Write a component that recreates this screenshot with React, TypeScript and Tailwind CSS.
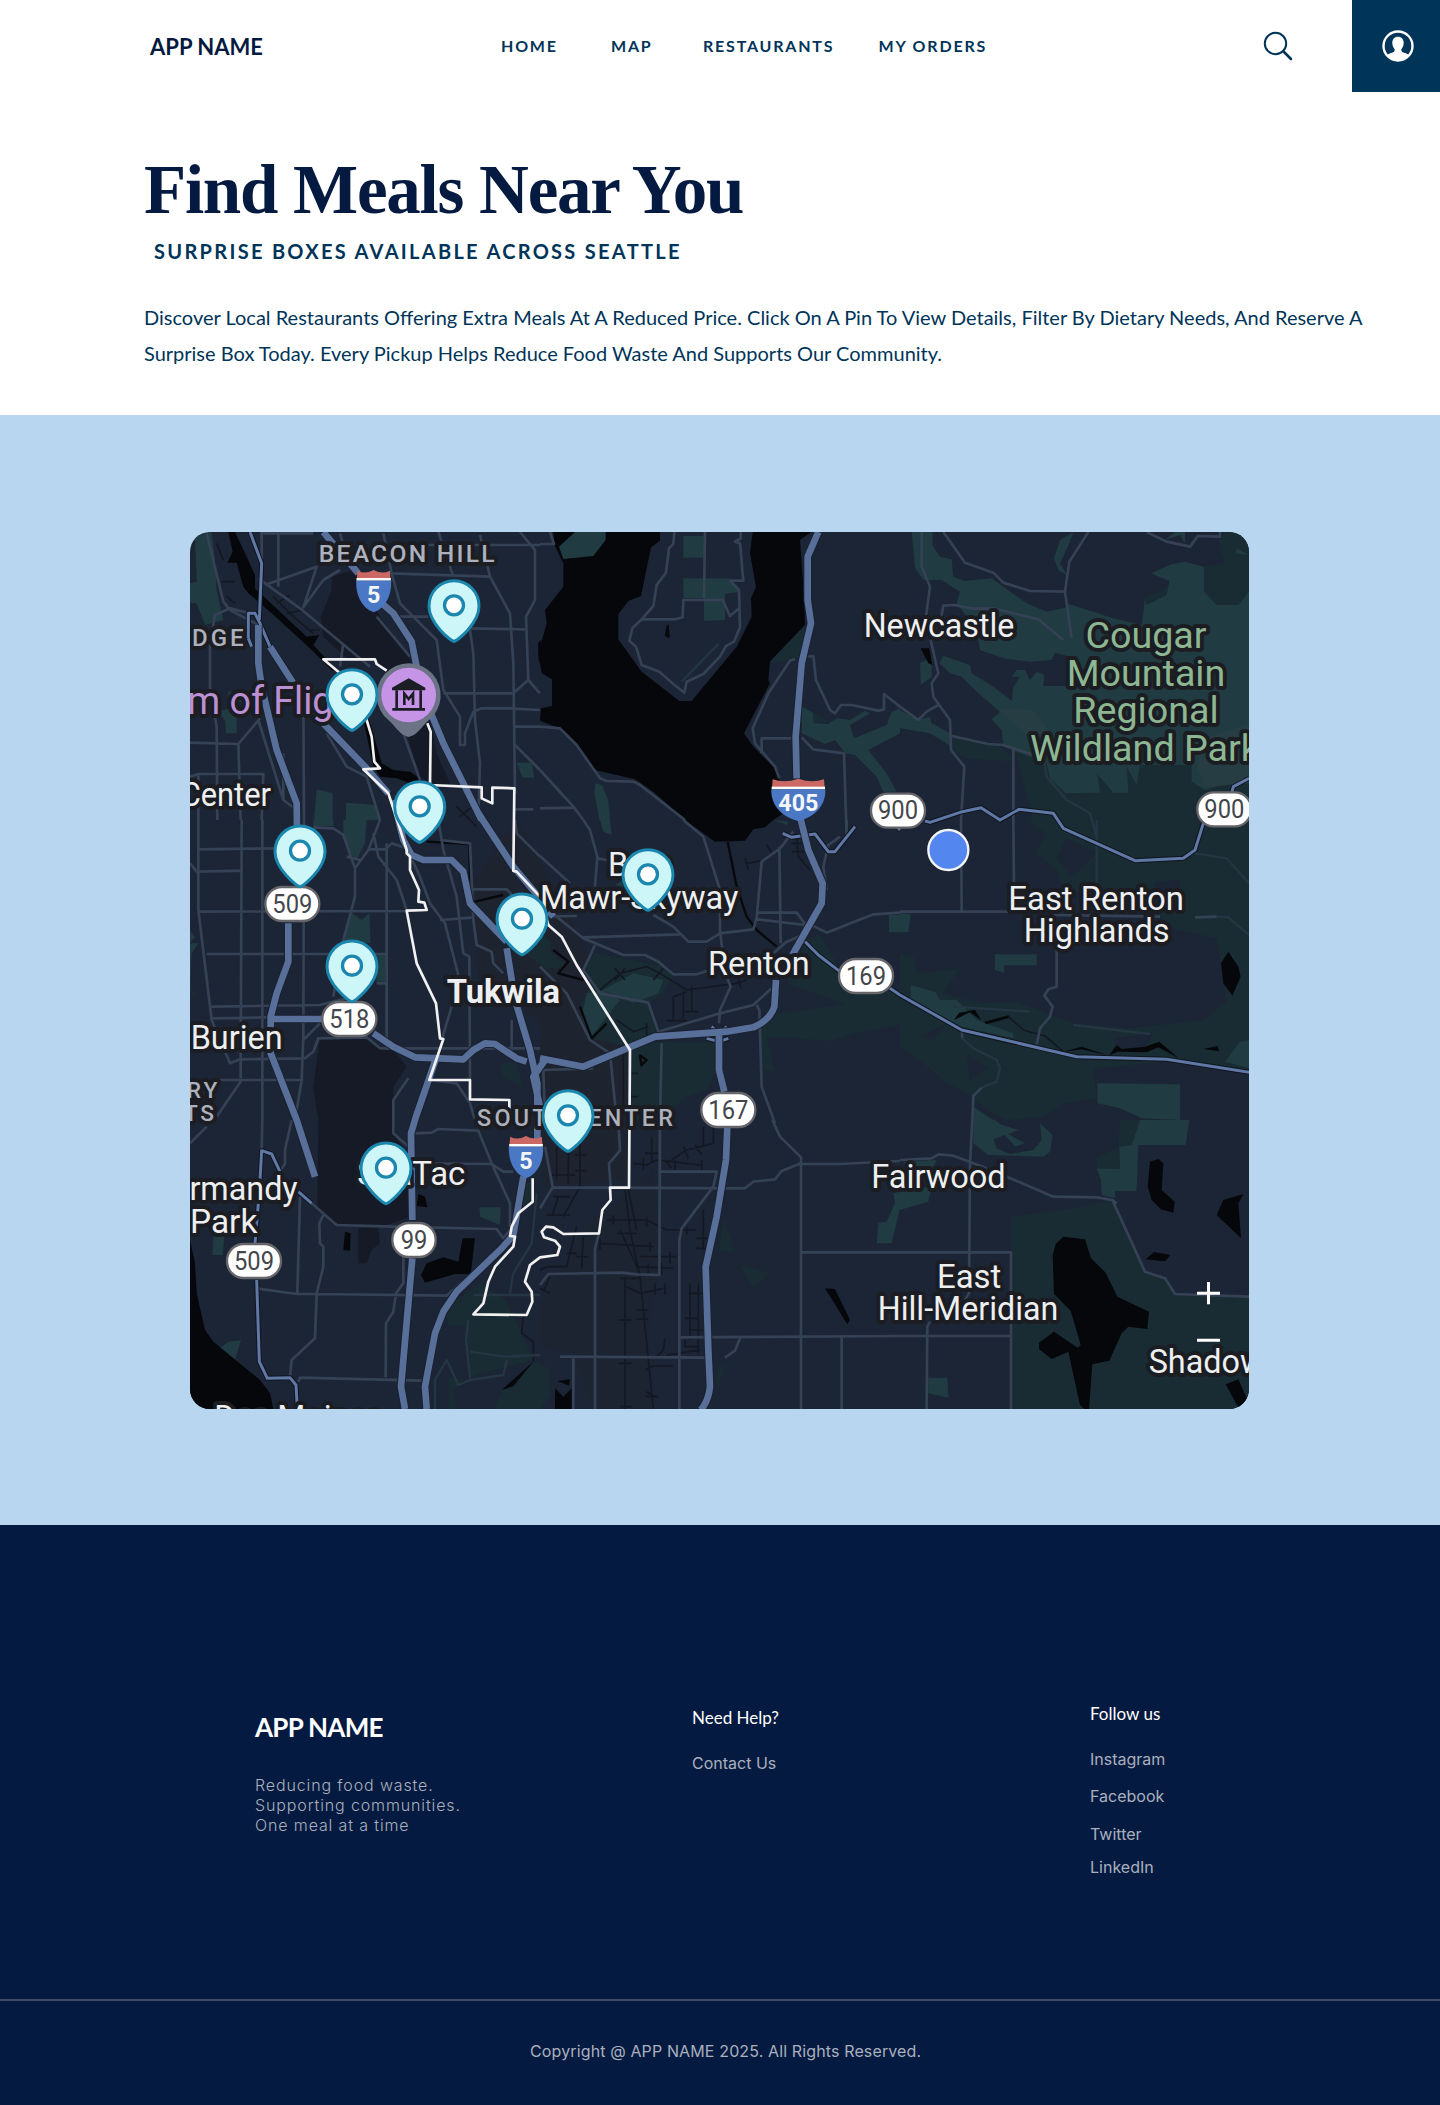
import React from "react";

type Tile = {
  x: number;
  y: number;
  shade?: string;
  parkDark?: string;
  park?: string;
  land?: string;
  water?: string;
  creek?: string;
  minor?: string;
  faint?: string;
  rail?: string;
  thin?: string;
  main?: string;
};

// The map is split in nine 1080x900 sheets, each with its own local origin.
const tiles: Tile[] = [
  {
    x: 0,
    y: 0,
    shade:
      "M455,170 L520,150 L560,200 L600,290 L680,400 L700,440 L620,455 L590,420 L500,415 L430,350 L422,290 L455,210Z M680,640 L750,600 L770,700 L810,790 L760,800 L720,770Z",
    park: "M45,50 L95,36 L105,120 L110,210 L130,300 L75,315 L50,250 L30,250 L30,190 L50,185Z M110,575 L170,560 L170,640 L138,640 L135,600Z M145,515 h45 v30 h-45z M410,808 L458,820 L458,900 L402,900Z M498,848 L590,855 L600,900 L498,900Z M1010,728 L1055,728 L1063,773 L1028,773Z",
    water:
      "M145,36 L165,36 L200,110 L225,165 L225,205 L300,275 L380,350 L418,345 L400,375 L475,455 L455,450 L385,380 L270,275 L205,220 L190,200 L170,128 L142,128 L158,95Z M548,590 L568,600 L605,730 L640,750 L690,755 L740,790 L690,790 L650,775 L600,770 L580,740Z M1074,370 l10,-10 v80 l-8,-20z",
    minor:
      "M245,36 L245,180 M295,36 L295,200 M240,40 L400,40 M80,40 L130,245 L150,270 L235,315 M235,175 L360,265 L570,440 M255,195 L410,140 L370,262 L430,180 L480,150 M30,668 L110,670 L175,672 L240,595 M210,280 L150,265 L105,285 L90,370 L90,500 L110,620 L112,900 M370,500 L372,900 M30,770 L55,762 L250,762 L245,900 M55,762 V900 M235,600 L310,840 L350,870 M175,670 L182,900 M310,700 L310,840 M610,40 L635,160 L660,250 L770,360 L790,510 L840,590 L840,675 L855,675 L855,640 L880,575 L905,565 L985,565 L1080,570 M630,160 L930,170 M775,36 L820,170 M900,45 L930,170 L990,280 L1000,430 L1005,820 M660,290 L745,290 M870,325 L1035,328 M870,330 L880,400 L885,600 L900,730 L895,900 M1020,36 L1065,90 L1065,240 L1038,290 L1045,480 L1080,520 M740,75 L1080,75 M480,40 L490,75 M790,520 L1000,520 L1045,480 M1005,620 L1080,620 M1000,670 L1080,750 M670,640 L720,780 M590,290 L690,410 M490,370 L480,440 M1060,868 L1005,868 M440,640 L500,740 L560,770 L600,900",
    rail: "M110,70 l20,50 M125,185 h40 M140,230 l25,20 M280,230 L340,290 L400,340 M290,250 l40,-25 M320,280 l50,-10 M390,330 h30 M830,860 l60,60 M840,890 l50,-40",
    thin: "M210,36 L245,130 L238,300 M205,355 L205,280 L225,280 L240,310 L270,380 M205,355 L215,380",
    main: "M430,36 L535,160 M600,245 L640,280 L695,365 L710,440 L745,560 L790,670 L905,900 M235,315 L235,430 L245,500 L290,690 L350,850 L352,1000 M270,380 L340,490 L430,610 L560,745 L625,820",
  },
  {
    x: 1080,
    y: 0,
    water:
      "M40,36 L815,36 L780,60 L793,240 L795,315 L690,425 L685,480 L690,490 L612,640 L640,680 L680,720 L715,755 L730,880 L700,900 L675,922 L640,928 L615,962 L525,965 L490,940 L435,900 L340,815 L285,778 L165,750 L100,665 L60,625 L0,602 L3,565 L36,558 L36,478 L5,460 L-5,400 L20,310 L15,270 L70,200 L70,130 L43,75Z",
    land: "M360,36 L360,62 L333,82 L303,228 L265,243 L235,283 L235,358 L305,455 L418,543 L455,543 L590,380 L635,290 L633,235 L648,200 L630,100 L638,36Z",
    parkDark: "M795,315 L785,410 L700,430 L690,425Z M785,555 L865,605 L820,612Z",
    park: "M105,36 L197,36 L197,60 L160,108 L70,117 L57,80Z M430,48 h62 v65 h-62z M430,175 L565,175 L598,215 L555,222 L555,300 L492,303 L492,235 L430,235Z M785,560 L820,580 L820,610 L865,612 L890,595 L930,600 L975,572 L990,580 L930,615 L942,655 L1040,615 L1055,575 L1080,565 L1080,640 L985,690 L1040,760 L1070,815 L1030,815 L1010,770 L945,705 L915,700 L885,660 L855,672 L785,640Z M165,790 L185,795 L205,840 L210,900 L178,900 L163,820Z",
    creek: "M383,318 L386,350 L378,345Z",
    minor:
      "M403,36 L400,72 L387,85 L378,158 L350,195 L340,258 L305,298 L277,325 L268,362 L288,380 L305,435 L358,455 L400,492 L433,518 L440,485 L490,462 L540,410 L558,378 L582,365 L600,322 L597,210 L570,182 L610,182 L600,70 L585,65 L602,55 L602,36 M495,36 L492,235 M305,298 L405,298 L428,292 L430,240 L548,240 L570,288 L597,265 M0,620 L60,625 L110,675 L180,775 L200,783 L280,785 L300,795 L435,900 M0,750 L100,860 L130,900 M0,865 L100,863 M30,36 L42,72 L0,72 M765,417 L750,422 L685,520 L638,625 L645,670 L705,740 L718,775 M755,655 L665,655 L665,700 M805,410 L820,408 L828,480 L870,570 L885,580 L903,555 L935,555 L1015,572 L1032,568 L1032,522 L1080,560 M785,652 L820,688 L912,700 L920,950",
    faint: "M425,485 L535,372",
    main: "M835,36 L803,110 L803,240 L813,310 L785,430 L767,650 L770,775",
  },
  {
    x: 2160,
    y: 0,
    parkDark:
      "M345,690 L430,720 L450,700 L1047,700 L1047,905 L400,905 L370,790Z M975,36 L1047,36 L1047,215 L1015,255 L740,255 L735,235 L912,140 L975,130 L955,70Z M155,640 L300,680 L350,725 L195,715 L155,690Z",
    park: "M35,36 L98,36 L97,75 L120,110 L155,118 L160,170 L195,183 L275,175 L380,250 L440,275 L500,262 L500,250 L640,295 L725,315 L735,235 L740,255 L800,225 L808,183 L752,160 L815,133 L855,125 L912,140 L912,215 L950,255 L1015,255 L1047,215 L1047,770 L915,810 L875,785 L875,735 L720,735 L710,795 L680,740 L685,818 L640,818 L592,762 L600,818 L498,820 L450,775 L440,730 L310,680 L305,630 L275,598 L335,545 L340,500 L360,470 L335,470 L350,450 L375,450 L390,480 L410,455 L433,465 L430,498 L510,498 L510,410 L465,398 L455,420 L390,425 L310,415 L240,390 L230,330 L170,250 L180,215 L125,180 L70,180 L45,145Z M0,570 L55,600 L90,590 L95,610 L150,640 L155,680 L90,640 L0,625Z M118,430 L130,407 L210,435 L215,460 L280,500 L345,550 L300,575 L235,520 L185,470 L150,460Z M60,430 L95,410 L95,470 L62,495Z M480,60 L520,36 L510,65 L480,130 L500,165 L475,150 L462,115Z M795,60 L825,36 L855,36 L855,70 L840,45Z M1010,85 L1047,105 L1008,100Z",
    water: "M62,385 L88,385 L97,435 L85,430Z",
    minor:
      "M65,36 L65,140 L90,200 L78,290 M130,36 L195,128 L280,158 L310,188 L390,213 L495,215 M565,36 L508,125 L495,215 L515,355 M122,300 L130,257 L165,255 L215,266 L280,265 L415,298 L490,360 M92,360 L115,460 L95,490 L100,530 L150,600 L153,690 L193,740 L183,900 M0,560 L55,600 L80,575 L115,555 M155,648 L265,672 L310,675 L420,710 M340,685 L340,900 M740,36 L800,65 L870,80 L893,48 L960,50 L960,36",
    faint: "M430,710 L440,770 L500,840 L570,880 L590,950",
    thin: "M-30,897 L0,930 M75,903 L90,907 L180,877 L243,863 L300,900 L357,868 L460,880 L490,925 L705,1022 L850,1015 L885,990 L910,910 M1047,775 L1000,800 L992,830",
  },
  {
    x: 0,
    y: 900,
    shade:
      "M420,655 L560,655 L600,685 L640,690 L680,740 L640,800 L640,900 L645,950 L685,1000 L690,1190 L620,1215 L470,1212 L412,1165 L415,900 L400,800Z",
    park: "M400,0 L460,0 L460,18 L400,18Z M490,0 L560,0 L555,70 L530,120 L510,100 L490,50Z M510,275 L545,300 L568,280 L572,370 L490,365Z M590,400 L620,402 L615,485 L590,485Z M30,330 L45,350 L30,370 L55,370 L35,400 L30,520Z",
    parkDark: "M965,730 L1010,730 L1030,800 L965,770Z M1035,400 L1080,370 L1115,400 L1150,430 L1100,450Z M30,490 L48,530 L30,520Z",
    creek: "M740,65 L868,72 L870,190 M885,245 L970,225",
    minor:
      "M55,0 L55,270 L95,600 L150,730 L180,718 L375,715 L400,695 L415,655 L560,652 L600,685 L1080,685 M185,0 L182,775 M247,0 L247,900 M372,0 L370,650 L365,780 L345,900 M55,88 L300,85 M55,155 L185,152 M55,275 L680,273 M80,402 L620,402 M95,560 L420,555 L520,530 M95,595 L270,592 M95,780 L370,780 M30,130 L55,160 M600,0 L565,90 L525,145 L490,45 L460,25 L400,22 M525,145 L525,230 L490,360 L460,530 M565,88 L620,88 M620,70 L620,690 M580,40 L595,110 L650,180 L680,270 M620,85 L635,70 L680,85 L720,170 L750,250 L795,310 L835,465 M775,0 L790,90 L830,230 L850,400 L868,410 L870,780 M780,60 L870,70 L880,300 L890,375 L935,395 L940,430 L970,460 M880,208 L980,208 L1010,240 M780,300 L875,293 M1005,0 L1010,40 L1080,110 M815,560 L785,660 M370,660 L420,610 M110,890 L185,780 M640,900 L640,840 L685,775 M750,780 L830,790 L870,850 L885,900 M995,600 L995,690 M590,490 L620,490 M500,110 L540,120",
    main: "M325,310 L325,425 L290,520 L272,590 L272,700 L350,900 L405,1070 M270,597 L430,597 M580,640 L640,680 L705,712 L850,718 L880,690 L915,670 L945,672 L1010,715 L1040,725 M895,-20 L1000,140 L1080,235 L1120,290 M640,-60 L670,60 L695,105 L730,120 L815,120 L850,155 L870,250 L980,365 M770,710 L708,890 L693,940 L697,1200 M980,385 L1005,540 L1050,690 L1072,790 L1072,960 M1095,720 L1060,770 L1080,860",
  },
  {
    x: 1080,
    y: 900,
    parkDark:
      "M135,435 L165,400 L380,440 L400,460 L370,520 L325,548 L350,630 L260,680 L150,655 L120,560 L150,500Z M360,665 L530,665 L530,750 L500,810 L440,830 L360,900 L275,900 L275,690Z M650,600 L720,580 L915,552 L740,490 L800,360 L840,340 L900,450 L1080,520 L1080,615 L960,635 L870,663 L770,655 L680,650 L705,755 L670,750Z M0,330 L35,370 L30,400 L75,430 L50,450 L0,430Z",
    park: "M190,510 L280,460 L370,480 L355,520 L280,550Z M180,0 L210,0 L215,45 L190,35Z M1047,285 h33 v52 h-33z M700,0 L745,5 L740,15Z M140,520 L190,510 L240,540 L150,655 L125,590Z M225,195 L250,180 L250,200Z",
    creek: "M563,65 L590,200 L620,290 L650,330 L710,380 M300,706 L320,720 L304,736Z M40,390 L85,425 L55,460 L130,480 M120,560 L155,655 L200,610",
    minor:
      "M430,0 L490,50 L540,210 L540,330 L548,400 M130,0 L150,30 L172,110 L165,200 M0,108 L90,190 M172,115 L230,125 M0,250 L50,290 L130,355 L250,405 L315,405 L355,425 L400,463 L470,463 L510,450 M130,352 L420,343 M165,375 L130,450 L180,520 L325,548 L355,635 M340,285 L400,320 L445,365 L500,365 L540,340 L640,328 L650,295 L665,125 L720,85 L760,35 M718,80 L722,370 M650,278 L770,278 L800,318 M650,298 L820,318 L860,338 L1000,283 L1080,278 M900,50 L865,75 L850,140 L860,210 M560,470 L572,500 L540,570 L537,610 M355,635 L540,580 L640,555 L700,500 M650,555 L658,570 L665,800 L705,910 M0,440 L80,520 L150,660 L210,700 L230,900 M365,670 L360,900 M10,750 L15,900 M160,745 L10,750 M700,400 L740,365 L775,350 M920,0 L920,50 M0,290 L110,288",
    rail: "M180,510 L240,460 L320,440 L360,460 L440,510 L590,490 L620,480 M225,445 l30,35 M255,445 l-30,35 M340,480 l30,-35 M400,600 L400,530 L440,515 M380,602 h60 M430,595 v-80 M455,500 L455,575 M435,575 h40 M620,130 L680,120 M615,115 l10,35 M680,75 l20,30 M770,50 L775,110 L810,150 M755,70 h40 M755,95 h40 M230,600 L280,635 L325,620 M320,610 v40 M250,700 v180 M270,760 h25 M270,830 h25 M595,480 l8,25",
    thin: "M728,40 L755,52 L825,42 L865,95 L885,95 L945,20 M795,365 L835,405 L900,455 M1050,505 L1080,525 L1265,630 L1610,710 L1880,718 L2130,757 M500,655 L537,665 L565,655 M515,620 L537,640 L560,620",
    main: "M780,-10 L805,90 L848,190 L845,250 L757,405 M708,480 L703,560 Q690,600 640,622 L560,635 L345,650 L130,740 L0,715 M537,635 L537,750 L553,815",
  },
  {
    x: 2160,
    y: 900,
    parkDark:
      "M380,0 L435,40 L410,100 L470,150 L485,200 L780,290 L830,330 L950,355 L980,545 L910,600 L690,625 L520,610 L440,580 L350,545 L240,550 L130,520 L180,445 L50,460 L40,410 L0,400 L0,680 L60,720 L140,790 L220,830 L260,870 L320,900 L380,895 L430,890 L490,850 L590,835 L580,745 L800,725 L1047,757 L1047,0Z",
    land: "M470,115 L500,55 L590,100 L515,170Z M640,655 L760,640 L730,690 L660,690Z M765,185 L840,180 L830,250 L770,230Z M200,700 L265,745 L210,780Z M60,650 L140,610 L100,660Z",
    park: "M285,403 h125 v33 h-98 v22 L285,450Z M0,280 L32,283 L25,337 L0,337Z M32,495 L105,515 L120,540 L170,540 L230,600 L340,640 L340,655 L185,620 L32,540Z M592,790 L840,793 L840,900 L725,895 L660,865 L592,850Z M975,725 L1020,665 L1047,660 L1047,745Z M220,860 L280,900 L220,900Z",
    water:
      "M985,395 L1015,440 L1022,470 L997,527 L970,490 L963,430Z M162,600 L178,578 L225,570 L243,600 L210,577Z M253,605 L325,586 L330,593 L258,613Z M628,705 L650,675 L665,687 L735,680 L778,665 L835,714 L775,682 L740,697 L655,695Z M910,687 L953,678 L957,694Z M490,695 L545,680 L620,705 L545,688Z",
    rail: "M325,590 L370,630 L435,648 L490,695",
    minor:
      "M183,0 L185,277 M0,275 L330,275 M340,0 L342,190 M450,285 L780,290 M885,292 L950,290 M470,390 L470,500 L445,508 L433,527 L458,560 L450,590 L420,625 L410,675 M185,630 L187,655 M245,803 L220,828 L217,900",
    faint: "M885,100 L980,115 L1047,190 M590,0 L590,200 M187,655 L220,685 L290,720 L300,745 L290,785 L245,803 M950,290 L985,292 L1047,345 M160,560 L390,575 M520,615 L750,642",
  },
  {
    x: 0,
    y: 1800,
    shade: "M535,325 L595,322 L600,370 L575,390 L560,430 L535,430Z",
    park: "M100,350 L133,350 L128,405 L97,405Z M120,685 L145,665 L183,660 L165,720Z M898,262 L962,262 L960,315 L900,290Z",
    parkDark:
      "M830,540 L900,490 L975,540 L1025,640 L1060,720 L870,770 L865,700 L855,620 L805,615 L795,570Z M1000,800 L1060,725 L1110,745 L1110,830 L1080,867 L945,867 L965,810Z M805,770 L850,780 L820,810 L830,867 L805,867Z M1030,190 L1058,190 L1050,245 L1025,260Z",
    water:
      "M30,360 L45,430 L50,520 L75,630 L100,665 L240,780 L270,820 L280,867 L30,867Z M495,335 L512,340 L510,392 L490,390Z M715,222 L735,230 L742,262 L710,258Z M723,465 L740,430 L790,412 L835,425 L848,355 L885,355 L872,463 L825,462 L735,488Z M965,810 L1060,725 L1000,798Z",
    rail: "M1030,590 L1025,640 L1060,665 L1060,725",
    minor:
      "M247,0 L245,90 M335,0 L315,90 L315,130 L300,155 M30,70 L80,20 M360,230 L352,520 M230,505 L350,522 L410,522 L800,527 L870,465 M395,250 L470,315 L640,320 L950,327 L970,355 L990,330 M430,285 L418,310 L420,370 L430,380 L430,440 L410,520 L405,655 L335,720 L330,770 M355,785 L360,773 L725,782 M670,410 L670,490 L648,520 L640,575 L618,610 L617,772 M640,0 L640,40 L685,80 M705,40 L755,38 L775,27 L895,32 L935,130 L990,250 L990,320 M715,130 L935,132 L970,155 L1000,155",
    faint: "M880,525 L1080,525 M865,600 L858,660 L870,775 M870,695 L975,710 L1080,705 M765,867 L765,780 L800,720 L835,795 L870,780 L970,765 L980,720 M1070,220 L1055,370 L1000,460 L990,520",
    thin: "M240,180 L245,92 L275,102 L300,155 M355,215 L395,250 M235,250 L225,370 M230,480 L238,725 L262,775 L330,773 L348,795 L352,867",
    main: "M697,415 L663,800 L675,867 M1030,170 L1000,345 L965,385 L830,515 L790,575 L765,640 L735,800 L740,867",
  },
  {
    x: 1080,
    y: 1800,
    parkDark: "M553,297 L585,393 L535,393Z M597,432 L688,460 L640,505Z M525,820 L535,750 L557,725Z",
    park: "M1060,220 L1080,215 L1080,265 L1055,370 L1010,370 L1015,308 L1040,305 L1065,250Z",
    water:
      "M855,505 L885,507 L930,600 L922,613Z M45,805 L70,830 L95,805 L95,867 L45,867Z M52,783 L90,778 L88,797Z",
    minor:
      "M697,0 L720,50 L783,112 L783,867 M783,132 L900,132 L1080,123 M783,130 L725,153 L705,178 L640,185 L615,205 L38,202 L0,265 M360,0 L358,465 L290,463 L245,458 L25,462 L0,495 M362,155 L530,155 L520,200 L425,325 L418,360 L418,867 M165,867 L165,385 L177,340 M212,200 L207,130 L240,92 L235,0 M787,397 L1080,397 M420,652 L1080,648 M60,710 L500,713 M555,713 L585,692 L600,655 M100,710 L100,867 M905,650 L905,867 M15,80 L38,200",
    rail: "M255,210 L270,330 L300,470 L340,867 M265,210 L290,330 M240,330 L300,460 M255,470 L255,867 M380,130 L440,90 L520,70 L520,20 M490,20 v60 M375,120 l20,25 M430,80 l15,35 M465,75 l20,30 M280,130 L320,135 L350,120 L480,135 M335,50 V130 M315,100 h40 M310,115 v35 M405,120 v30 M485,120 v30 M50,80 v100 M85,90 v100 M120,50 L120,200 L70,290 M35,165 h70 M105,105 h35 M105,152 h35 M40,230 h50 M55,230 L35,290 M20,285 h70 M450,490 L450,660 M475,490 V700 M445,520 h45 M435,595 h40 M450,630 h40 M435,660 L435,680 H480 M490,270 L490,390 M470,355 h40 M468,385 h30 M200,300 L320,300 L380,330 L470,330 M220,285 v30 M320,290 v30 M440,320 v25 M230,340 h60 M180,370 L340,380 M180,355 v35 M330,365 v30 M300,410 L410,410 M390,395 v35 M290,440 L400,445 M365,430 v35 M325,430 v35 M0,450 L20,440 L80,440 L110,320 M130,350 L125,445 M110,410 h35 M80,400 h30 M260,500 L300,520 L370,505 M345,490 v35 M375,490 v35 M240,475 h60 M235,600 h40 M290,570 h35 M290,597 h35 M235,730 h40 M240,860 h35 M315,750 L340,738 H400 M350,710 L370,690 L375,655 M380,705 L480,690 M315,830 h40 M318,815 l30,15 M30,470 l-20,45 M0,505 l30,15",
    main: "M562,20 L558,120 L530,290 L497,440 L505,690 L510,800 Q505,845 482,870",
  },
  {
    x: 2160,
    y: 1800,
    parkDark:
      "M333,290 L540,262 L640,235 L735,455 L795,475 L825,525 L1047,530 L1047,867 L333,867Z M660,0 L720,0 L695,75 L655,80Z M590,110 L655,85 L660,150 L590,145Z",
    park: "M220,0 L285,0 L300,12 L355,30 L325,42 L375,70 L345,80 L315,45 L280,58 L290,85 L330,102 L400,90 L425,60 L420,10 L458,45 L450,95 L430,110 L265,105 L220,70Z M720,0 L868,0 L857,75 L715,75 L710,213 L645,213 L645,235 L605,225 L603,180 L590,145 L660,148 L658,80 L695,75Z M0,210 L95,200 L85,245 L0,270Z M10,125 L110,120 L95,150 L30,160Z M85,773 h57 l3,60 L85,820Z",
    land: "M412,85 L428,40 L450,55 L445,92Z",
    water:
      "M490,350 L555,358 L573,415 L617,458 L652,530 L747,575 L742,627 L685,620 L665,640 L628,722 L577,733 L567,867 L553,867 L540,855 L505,695 L455,717 L417,687 L417,668 L462,635 L533,683 L542,675 L512,572 L462,522 L458,405 L467,372Z M750,125 L775,117 L790,130 L785,210 L824,245 L820,278 L783,268 L755,240 L743,200Z M970,240 L1030,222 L1015,250 L1023,355 L950,285Z M737,418 L762,396 L811,405 L795,424Z M977,793 L1015,778 L1047,850 L1020,867 L1008,850Z",
    minor:
      "M217,0 L210,130 L207,520 L195,540 M90,605 L82,620 L80,867 M0,120 L95,115 L115,103 L160,107 L260,145 M320,170 L460,230 L590,232 L637,240 L735,455 L795,475 L825,522 L1047,530 M637,240 L650,250 M0,397 L333,397 L333,867 M0,648 L333,648",
  },
];

const LAND = "#1c2535";

type Label = {
  t: string;
  x: number;
  y: number;
  size?: number;
  len?: number;
  anchor?: "start" | "middle" | "end";
  fill?: string;
  bold?: boolean;
};

const GREY = "#adb1be";
const GREEN = "#8db793";

const labels: Label[] = [
  { t: "BEACON HILL", x: 416, y: 126, size: 74, len: 528, fill: GREY },
  { t: "DGE", x: 36, y: 378, size: 72, len: 155, fill: GREY },
  { t: "m of Flig", x: 22, y: 583, size: 117, len: 438, fill: "#bb90d5" },
  { t: "Center", x: 2, y: 858, len: 271 },
  { t: "Newcastle", x: 2051, y: 350, len: 452 },
  { t: "Cougar", x: 2898, y: 383, size: 113, anchor: "middle", fill: GREEN },
  { t: "Mountain", x: 2898, y: 497, size: 113, anchor: "middle", fill: GREEN },
  { t: "Regional", x: 2898, y: 610, size: 113, anchor: "middle", fill: GREEN },
  { t: "Wildland Park", x: 2550, y: 724, size: 113, fill: GREEN },
  { t: "Burien", x: 32, y: 1588, len: 276 },
  { t: "Tukwila", x: 800, y: 1450, len: 340, bold: true },
  { t: "RY", x: 20, y: 1733, size: 68, len: 92, fill: GREY },
  { t: "TS", x: 12, y: 1803, size: 68, len: 90, fill: GREY },
  { t: "SOUTHCENTER", x: 891, y: 1818, size: 70, len: 588, fill: GREY },
  { t: "SeaTac", x: 532, y: 1995, len: 324 },
  { t: "Normandy", x: 353, y: 2040, anchor: "end" },
  { t: "Park", x: 30, y: 2138, len: 202 },
  { t: "Des Moines", x: 103, y: 2726, len: 506 },
  { t: "Bryn", x: 1284, y: 1068 },
  { t: "Mawr-Skyway", x: 1080, y: 1166, len: 595 },
  { t: "Renton", x: 1584, y: 1365, len: 305 },
  { t: "East Renton", x: 2485, y: 1170, len: 527 },
  { t: "Highlands", x: 2531, y: 1267, len: 438 },
  { t: "Fairwood", x: 2074, y: 2003, len: 403 },
  { t: "East", x: 2271, y: 2303, len: 193 },
  { t: "Hill-Meridian", x: 2093, y: 2400, len: 542 },
  { t: "Shadow", x: 2906, y: 2558 },
];

const routes = [
  { n: "509", x: 337, y: 1152 },
  { n: "518", x: 508, y: 1497 },
  { n: "509", x: 222, y: 2223 },
  { n: "99", x: 702, y: 2160 },
  { n: "169", x: 2058, y: 1368 },
  { n: "167", x: 1645, y: 1770 },
  { n: "900", x: 2154, y: 872 },
  { n: "900", x: 3133, y: 868 },
];

const pins: [number, number][] = [
  [822, 256],
  [516, 523],
  [719, 859],
  [360, 992],
  [1026, 1196],
  [1404, 1063],
  [516, 1337],
  [1164, 1786],
  [618, 1943],
];

function Shield({ x, y, w, n }: { x: number; y: number; w: number; n: string }) {
  const h = w / 2;
  return (
    <g transform={`translate(${x} ${y})`}>
      <path
        d={`M${-h + 4},2 Q${-h / 2},14 0,0 Q${h / 2},14 ${h - 4},2 L${h - 2},26 L${-h + 2},26Z`}
        fill="#cc6864"
      />
      <rect x={-h + 1} y={24} width={w - 2} height={8} fill="#fff" />
      <path
        d={`M${-h},32 L${h},32 C${h + 2},70 ${h * 0.75},112 0,127 C${-h * 0.75},112 ${-h - 2},70 ${-h},32Z`}
        fill="#4a78c4"
      />
      <text
        x={0}
        y={98}
        textAnchor="middle"
        fontSize={74}
        fontWeight={700}
        textLength={n.length * 40}
        lengthAdjust="spacingAndGlyphs"
        fill="#f4f6fb"
      >
        {n}
      </text>
    </g>
  );
}

function MapCanvas() {
  const layer = (key: keyof Tile, props: React.SVGProps<SVGPathElement>) =>
    tiles.map((t, i) =>
      t[key] ? (
        <path key={`${key}${i}`} transform={`translate(${t.x} ${t.y})`} d={t[key] as string} {...props} />
      ) : null,
    );
  return (
    <svg
      viewBox="30 36 3177 2631"
      preserveAspectRatio="none"
      className="block h-full w-full font-['Roboto',sans-serif]"
      fill="none"
      strokeLinejoin="round"
    >
      <rect x="0" y="0" width="3240" height="2700" fill={LAND} />
      <path d="M1240,2100 L1420,1950 L1440,2250 L1400,2450 L1420,2667 L1240,2667 L1180,2500 L1080,2480 L1080,2350Z" fill="#1f2230" opacity="0.4" />
      <path d="M1010,900 L1160,1170 L1340,1560 L1340,1980 L1090,2000 L1080,1500 L900,1400 L870,1100Z" fill="#1e2330" />
      {layer("shade", { fill: "#151a26" })}
      <path transform="translate(1080 0)" d={tiles[1].water} fill="#05070a" />
      {layer("parkDark", { fill: "#192c33" })}
      {layer("land", { fill: LAND })}
      {layer("park", { fill: "#203b41" })}
      <path d="M2450,565 L2560,570 L2640,680 L2590,690Z M3060,660 L3207,610 L3207,790 L3075,800 L3050,740Z" fill="#263d44" />
      {tiles.map((t, i) =>
        t.water && i !== 1 ? (
          <path key={`w${i}`} transform={`translate(${t.x} ${t.y})`} d={t.water} fill="#05070a" />
        ) : null,
      )}
      {layer("rail", { stroke: "#131823", strokeWidth: 5 })}
      {layer("creek", { stroke: "#07090d", strokeWidth: 7 })}
      {layer("faint", { stroke: "#253542", strokeWidth: 7 })}
      {layer("minor", { stroke: "#354154", strokeWidth: 8 })}
      {layer("thin", { stroke: "#10151f", strokeWidth: 15 })}
      {layer("thin", { stroke: "#5f78a5", strokeWidth: 9 })}
      {layer("main", { stroke: "#1a2130", strokeWidth: 26 })}
      {layer("main", { stroke: "#587099", strokeWidth: 20 })}
      <g stroke="#f1f1f2" strokeWidth="8">
        <path d="M620,452 L590,432 L585,418 L430,418 L475,455 L560,600 L575,650 L583,725 L600,745 L550,748 L625,820 L645,880 L680,990 L680,1000 L690,1010 L690,1050 L717,1110 L715,1145 L733,1148 L740,1170 L680,1172 L710,1330 L768,1450 L780,1555 L790,1557 L748,1680 L870,1680 L870,1738 L988,1740 L988,1770" />
        <path d="M742,610 L752,635 L750,795 L905,802 L905,835 L937,850 L937,803 L1003,805 L1000,1053 L1010,1055 L1080,1130 L1105,1215 L1145,1250 L1190,1335 L1350,1590 L1347,2003 L1290,2003 L1292,2040 L1267,2070 L1257,2140 L1150,2142 L1120,2122 L1098,2120 L1085,2135 L1092,2152 L1125,2162 L1140,2180 L1132,2205 L1080,2212 L1050,2235 L1035,2285 L1055,2315 L1057,2345 L1040,2385 L880,2383 L910,2350 L925,2285 L945,2240 L1000,2180 L1005,2150 L990,2148 L995,2120 L1015,2080 L1058,2045 L1058,1975" />
      </g>
      {labels.map((l, i) => (
        <text
          key={i}
          x={l.x}
          y={l.y}
          fontSize={l.size ?? 97}
          textLength={l.len}
          lengthAdjust={l.fill === GREY ? "spacing" : "spacingAndGlyphs"}
          textAnchor={l.anchor}
          fontWeight={l.bold ? 700 : l.fill === GREY ? 500 : 400}
          fill={l.fill ?? "#eeeff1"}
          stroke="#1b1d22"
          strokeWidth={24}
          paintOrder="stroke"
        >
          {l.t}
        </text>
      ))}
      {routes.map((r, i) => {
        const w = r.n.length === 2 ? 130 : 162;
        return (
          <g key={i}>
            <rect x={r.x - w / 2} y={r.y - 51} width={w} height={102} rx={50} fill="#fff" stroke="#65656a" strokeWidth={7} />
            <text x={r.x} y={r.y + 26} textAnchor="middle" fontSize={75} textLength={r.n.length * 40} lengthAdjust="spacingAndGlyphs" fill="#43464b">
              {r.n}
            </text>
          </g>
        );
      })}
      <Shield x={581} y={150} w={105} n="5" />
      <Shield x={1038} y={1848} w={103} n="5" />
      <Shield x={1855} y={776} w={162} n="405" />
      <g transform="translate(686 525)">
        <path d="M0,126 C-25,122 -36,98 -60,76 A96,96 0 1 1 60,76 C36,98 25,122 0,126Z" fill="#6c7386" />
        <circle r="82" fill="#c694e6" />
        <path d="M-50,-14 L-50,-22 L0,-50 L50,-22 L50,-14Z" fill="#1b1e24" />
        <path d="M-36,-14 V40 M36,-14 V40 M-49,43 H49" stroke="#1b1e24" strokeWidth="8" />
        <path d="M-13,30 V-4 L0,12 L13,-4 V30" stroke="#1b1e24" strokeWidth="8" strokeLinejoin="miter" />
      </g>
      {pins.map(([x, y], i) => (
        <g key={i} transform={`translate(${x} ${y})`} stroke="#1b86ae">
          <path
            d="M0,108 C-9,108 -75,54 -75,3 C-75,-41 -41,-74 0,-74 C41,-74 75,-41 75,3 C75,54 9,108 0,108Z"
            fill="#cdf6f9"
            strokeWidth="9"
          />
          <circle r="28.5" fill="#fff" strokeWidth="10" />
        </g>
      ))}
      <circle cx="2305" cy="990" r="60" fill="#5386ee" stroke="#f4f4f6" strokeWidth="7" />
      <path d="M3051,2320 H3120 M3085.500,2286 V2353 M3051,2461 H3120" stroke="#fff" strokeWidth="9" />
    </svg>
  );
}

const nav = [
  { label: "HOME", cls: "w-[110px]" },
  { label: "MAP", cls: "w-[92px]" },
  { label: "RESTAURANTS", cls: "w-[175.500px]" },
  { label: "MY ORDERS", cls: "w-[120px]" },
];

function Header() {
  return (
    <header className="flex h-[92px] items-center pl-[150px] font-['Lato',sans-serif] text-[#003459]">
      <div className="w-[351px] pt-0.5 text-[22px] font-bold leading-7 text-[#051a40]">APP NAME</div>
      <nav className="flex flex-1 text-base font-bold leading-5 tracking-[1.800px]">
        {nav.map((n) => (
          <a key={n.label} className={n.cls}>
            {n.label}
          </a>
        ))}
      </nav>
      <svg className="mr-[59px] size-[30px]" viewBox="0 0 30 30" fill="none" stroke="#003459" strokeLinecap="round">
        <circle cx="12.500" cy="12.500" r="10.700" strokeWidth="2" />
        <path d="M20.500,20.500 L28,28" strokeWidth="2.600" />
      </svg>
      <div className="flex h-[92px] w-[88px] items-center justify-center bg-[#003459] pl-1">
        <svg className="size-8" viewBox="0 0 32 32">
          <circle cx="16" cy="16" r="14.500" fill="none" stroke="#fff" strokeWidth="2.400" />
          <path
            d="M16,6.800 C12.300,6.800 10.300,9.400 10.300,13 C10.300,15.500 11.300,17.500 12.600,19.200 C13,21.600 11.500,22.200 9,23 C7.200,23.600 5.600,24.500 5,25.700 A14.500,14.500 0 0 0 27,25.700 C26.400,24.500 24.800,23.600 23,23 C20.500,22.200 19,21.600 19.400,19.200 C20.700,17.500 21.700,15.500 21.700,13 C21.700,9.400 19.700,6.800 16,6.800Z"
            fill="#fff"
          />
        </svg>
      </div>
    </header>
  );
}

export default function App() {
  return (
    <div className="h-[2105px] w-[1440px] overflow-hidden bg-white">
      <div className="h-[415px]">
        <Header />
        <section className="pl-36 pt-[62px] font-['Lato',sans-serif] text-[#003459]">
          <h1 className="whitespace-nowrap font-['Liberation_Serif',serif] text-[69px] font-bold leading-[72px] tracking-[-1.250px] text-[#051a40]">
            Find Meals Near You
          </h1>
          <h2 className="mt-[11px] whitespace-nowrap pl-2.5 text-xl font-bold leading-7 tracking-[2.300px]">
            SURPRISE BOXES AVAILABLE ACROSS SEATTLE
          </h2>
          <p className="mt-[34px] whitespace-nowrap text-xl leading-9">
            Discover Local Restaurants Offering Extra Meals At A Reduced Price. Click On A Pin To View Details, Filter By
            Dietary Needs, And Reserve A
            <br />
            Surprise Box Today. Every Pickup Helps Reduce Food Waste And Supports Our Community.
          </p>
        </section>
      </div>

      <section className="h-[1110px] bg-[#b8d6f0] pl-[190px] pt-[117px]">
        <div className="h-[877px] w-[1059px] overflow-hidden rounded-[20px]">
          <MapCanvas />
        </div>
      </section>

      <footer className="h-[580px] bg-[#051a40] text-base leading-5 text-[#a9b0be]">
        <div className="flex h-[476px] items-start border-b-2 border-[#404e6c] pl-[255px] font-['Inter',sans-serif]">
          <div className="w-[437px] pt-[186px]">
            <div className="font-['Lato',sans-serif] text-[26px] font-bold leading-8 tracking-[-0.700px] text-white">
              APP NAME
            </div>
            <p className="mt-8 font-light tracking-[0.870px]">
              Reducing food waste.
              <br />
              Supporting communities.
              <br />
              One meal at a time
            </p>
          </div>
          <div className="w-[398px] pt-[183px]">
            <div className="font-['Lato',sans-serif] text-[17px] text-white">Need Help?</div>
            <div className="mt-[25px]">Contact Us</div>
          </div>
          <div className="pt-[179px]">
            <div className="font-['Lato',sans-serif] text-[17px] text-white">Follow us</div>
            <div className="mt-[25px]">Instagram</div>
            <div className="mt-[17px]">Facebook</div>
            <div className="mt-[18px]">Twitter</div>
            <div className="mt-[13px]">LinkedIn</div>
          </div>
        </div>
        <p className="pl-[530px] pt-10 font-['Inter',sans-serif] tracking-[0.130px]">
          Copyright @ APP NAME 2025. All Rights Reserved.
        </p>
      </footer>
    </div>
  );
}
